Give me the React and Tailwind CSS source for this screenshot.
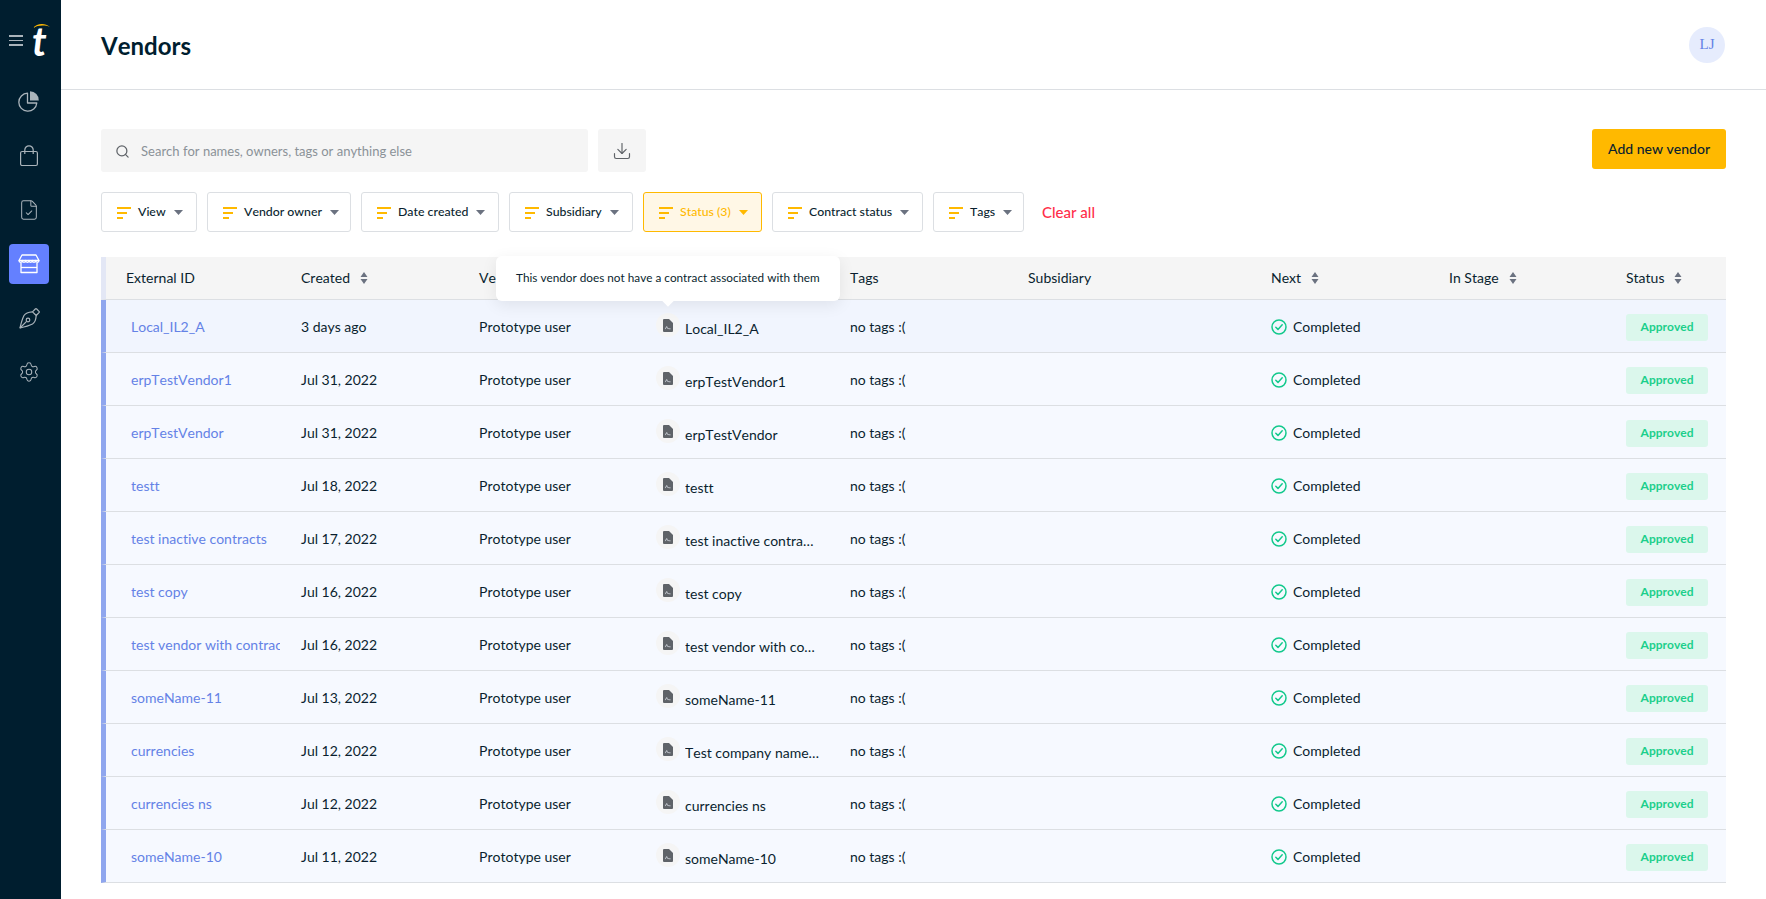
import { Search, Download, FileCheck, Settings } from 'lucide-react';

const rows = [
  { id: 'Local_IL2_A', created: '3 days ago', contract: 'Local_IL2_A' },
  { id: 'erpTestVendor1', created: 'Jul 31, 2022', contract: 'erpTestVendor1' },
  { id: 'erpTestVendor', created: 'Jul 31, 2022', contract: 'erpTestVendor' },
  { id: 'testt', created: 'Jul 18, 2022', contract: 'testt' },
  { id: 'test inactive contracts', created: 'Jul 17, 2022', contract: 'test inactive contracts' },
  { id: 'test copy', created: 'Jul 16, 2022', contract: 'test copy' },
  { id: 'test vendor with contract', created: 'Jul 16, 2022', contract: 'test vendor with contract' },
  { id: 'someName-11', created: 'Jul 13, 2022', contract: 'someName-11' },
  { id: 'currencies', created: 'Jul 12, 2022', contract: 'Test company name limited' },
  { id: 'currencies ns', created: 'Jul 12, 2022', contract: 'currencies ns' },
  { id: 'someName-10', created: 'Jul 11, 2022', contract: 'someName-10' },
];

const filters = [
  { label: 'View', width: 'w-[96px]' },
  { label: 'Vendor owner', width: 'w-[144px]' },
  { label: 'Date created', width: 'w-[138px]' },
  { label: 'Subsidiary', width: 'w-[124px]' },
  { label: 'Status (3)', width: 'w-[119px]', active: true },
  { label: 'Contract status', width: 'w-[151px]' },
  { label: 'Tags', width: 'w-[91px]' },
];

const gridCols = 'grid grid-cols-[195px_178px_177px_194px_178px_243px_178px_177px_100px]';

const PieIcon = () => (
  <svg width="22" height="22" viewBox="0 0 22 22" fill="none" className="-translate-y-[1px]">
    <path d="M9.5 3.2a9 9 0 1 0 9.3 9.8H9.5V3.2Z" stroke="#aab4bb" strokeWidth="1.3" strokeLinejoin="round" />
    <path d="M12 1.2a8.8 8.8 0 0 1 8.8 9.3H12V1.2Z" fill="#aab4bb" />
  </svg>
);

const BagIcon = () => (
  <svg width="20" height="22" viewBox="0 0 20 22" fill="none" stroke="#aab4bb" strokeWidth="1.2">
    <rect x="1.600" y="6.500" width="16.800" height="14" rx="1.500" />
    <path d="M5.800 9V5a4.200 4.200 0 0 1 8.400 0v4" />
  </svg>
);

const StoreIcon = () => (
  <svg width="22" height="20" viewBox="0 0 22 20" fill="none" stroke="#ffffff" strokeWidth="1.300" strokeLinejoin="round">
    <path d="M4 1h14l3 5.500H1L4 1Z" />
    <path d="M1 6.500c0 2.400 3.300 2.400 3.300 0 0 2.400 3.400 2.400 3.400 0 0 2.400 3.300 2.400 3.300 0 0 2.400 3.300 2.400 3.300 0 0 2.400 3.400 2.400 3.400 0 0 2.400 3.300 2.400 3.300 0" />
    <path d="M3 9v9.500h16V9" />
    <path d="M3 13.500h16" />
  </svg>
);

const NibIcon = () => (
  <svg width="21" height="21" viewBox="0 0 21 21" fill="none" stroke="#aab4bb" strokeWidth="1.200" strokeLinejoin="round">
    <path d="M13.500 3.800l3.700 3.700 2.800-2.800a1 1 0 0 0 0-1.400l-2.300-2.300a1 1 0 0 0-1.400 0l-2.800 2.800Z" />
    <path d="M13.500 3.800C10 4 6.500 5 5 7.500 3.500 10.500 2 15.500 1 20c4.500-1 9.500-2.500 12.500-4 2.500-1.500 3.500-5 3.700-8.500" />
    <path d="M1 20l6.600-6.600" />
    <circle cx="9" cy="12" r="1.800" />
  </svg>
);

const FilterIcon = () => (
  <svg width="14" height="12" viewBox="0 0 14 12" className="shrink-0">
    <rect x="0" y="0" width="14" height="2" fill="#ffb900" />
    <rect x="0" y="5" width="10" height="2" fill="#ffb900" />
    <rect x="0" y="10" width="6" height="2" fill="#ffb900" />
  </svg>
);

const Caret = ({ color }) => (
  <svg width="9" height="5" viewBox="0 0 9 5" className="shrink-0">
    <path d="M0 0h9L4.500 5Z" fill={color} />
  </svg>
);

const SortIcon = () => (
  <svg width="8" height="12" viewBox="0 0 8 12" className="ml-[10px] shrink-0">
    <path d="M4 0l3.500 5H.5Z M4 12L.5 7h7Z" fill="#6b7280" />
  </svg>
);

const DocIcon = () => (
  <svg width="10" height="13" viewBox="0 0 10 13">
    <path d="M0 1a1 1 0 0 1 1-1h5l4 4v8a1 1 0 0 1-1 1H1a1 1 0 0 1-1-1Z" fill="#5f6368" />
    <path d="M2 10c1-.2 1.200-2.500 1.700-2.500S4 9.500 4.800 9.500 6 9.800 7.500 9.800" stroke="#f1f5fe" strokeWidth=".7" fill="none" />
  </svg>
);

const CheckIcon = () => (
  <svg width="16" height="16" viewBox="0 0 16 16" fill="none" className="shrink-0">
    <circle cx="8" cy="8" r="7" stroke="#12c98c" strokeWidth="1.500" />
    <path d="M4.800 8.200l2.200 2.200 4.200-4.600" stroke="#12c98c" strokeWidth="1.500" strokeLinecap="round" strokeLinejoin="round" />
  </svg>
);

const Sidebar = () => (
  <aside className="w-[61px] shrink-0 bg-[#001e2f] flex flex-col">
    <div className="h-[82px] w-full relative">
      <div className="absolute left-[9px] top-[35px] w-[14px] flex flex-col gap-[3px]">
        <span className="h-[1.500px] bg-[#aab4bb]" />
        <span className="h-[1.500px] bg-[#aab4bb]" />
        <span className="h-[1.500px] bg-[#aab4bb]" />
      </div>
      <span className="absolute left-[32px] top-[22px] text-[40px] leading-[38px] font-bold italic text-white">t</span>
      <svg width="17" height="6" viewBox="0 0 17 6" className="absolute left-[33px] top-[23px]">
        <path d="M0 5C4 0 12-.5 17 4 12 1.800 5 2 0 5Z" fill="#ffb900" />
      </svg>
    </div>
    <div className="flex flex-col pl-[9px] gap-[14px]">
      <div className="w-10 h-10 flex items-center justify-center"><PieIcon /></div>
      <div className="w-10 h-10 flex items-center justify-center"><BagIcon /></div>
      <div className="w-10 h-10 flex items-center justify-center"><FileCheck size={22} strokeWidth={1.1} color="#aab4bb" /></div>
      <div className="w-10 h-10 flex items-center justify-center rounded bg-[#6480ff]"><StoreIcon /></div>
      <div className="w-10 h-10 flex items-center justify-center"><NibIcon /></div>
      <div className="w-10 h-10 flex items-center justify-center"><Settings size={22} strokeWidth={1.1} color="#aab4bb" /></div>
    </div>
  </aside>
);

const FilterButton = ({ label, width, active }) => (
  <button
    className={`h-10 ${width} shrink-0 rounded-[3px] border pl-[15px] pt-[1px] flex items-center gap-[7px] text-[12.3px] font-medium ${
      active ? 'border-[#ffb900] bg-[#fff7e6] text-[#ffb900]' : 'border-[#dcdfe3] bg-white text-[#0a1f2f]'
    }`}
  >
    <FilterIcon />
    <span>{label}</span>
    <span className="ml-[1px]"><Caret color={active ? '#ffb900' : '#6b7280'} /></span>
  </button>
);

const VendorRow = ({ row, highlighted }) => (
  <div className={`${gridCols} h-[53px] pt-[2px] border-b border-l-[5px] border-b-[#dcdfe3] border-l-[#8fa6ee] items-center text-sm text-[#0a1f2f] ${highlighted ? 'bg-[#f1f5fe]' : 'bg-[#f6f9ff]'}`}>
    <div className="pl-[25px] pr-[21px]">
      <div className="overflow-hidden whitespace-nowrap text-[#6482e6]">{row.id}</div>
    </div>
    <div>{row.created}</div>
    <div>Prototype user</div>
    <div className="flex items-center">
      <div className="w-6 h-6 shrink-0 rounded-full bg-[#f5f5f5] flex items-center justify-center -translate-y-[2px]">
        <DocIcon />
      </div>
      <span className="ml-[5px] w-[135px] truncate translate-y-[2px]">{row.contract}</span>
    </div>
    <div>no tags :(</div>
    <div />
    <div className="flex items-center gap-[6px]">
      <CheckIcon />
      <span>Completed</span>
    </div>
    <div />
    <div>
      <span className="w-[82px] h-[27px] rounded-[3px] bg-[#dbf7ec] text-[#1ccf8b] text-xs font-bold flex items-center justify-center">Approved</span>
    </div>
  </div>
);

const HeaderCell = ({ label, sortable, className }) => (
  <div className={`flex items-center ${className || ''}`}>
    <span>{label}</span>
    {sortable && <SortIcon />}
  </div>
);

export default function App() {
  return (
    <div className="flex h-[899px] overflow-hidden bg-white font-['Lato',sans-serif] text-[#0a1f2f] [font-variant-ligatures:none] [font-kerning:none]">
      <Sidebar />
      <main className="flex-1 min-w-0">
        <header className="h-[90px] border-b border-[#dcdfe3] flex items-center justify-between pl-10 pr-[41px]">
          <h1 className="text-2xl pt-[2px] font-bold text-[#001e2f]">Vendors</h1>
          <div className="w-9 h-9 rounded-full bg-[#e6ecfd] flex items-center justify-center text-[15px] text-[#6482e6] font-['Liberation_Serif',serif]">LJ</div>
        </header>

        <div className="pt-[39px] pl-10 pr-10 relative">
          <div className="flex items-start justify-between">
            <div className="flex gap-[10px]">
              <div className="w-[487px] h-[43px] pt-[2px] rounded-[3px] bg-[#f5f5f5] flex items-center pl-[14px] gap-[11px] text-[13px] text-[#8b9298]">
                <Search size={15} strokeWidth={2} color="#5f6368" />
                <span>Search for names, owners, tags or anything else</span>
              </div>
              <div className="w-12 h-[43px] rounded-[3px] bg-[#f5f5f5] flex items-center justify-center">
                <Download size={20} strokeWidth={1.400} color="#5f6368" />
              </div>
            </div>
            <button className="w-[134px] h-10 rounded-[3px] bg-[#ffb900] text-sm font-medium text-[#0a1f2f]">Add new vendor</button>
          </div>

          <div className="mt-5 flex items-center gap-[10px]">
            {filters.map((f) => (
              <FilterButton key={f.label} {...f} />
            ))}
            <span className="ml-2 text-[15px] font-medium text-[#ff2d4a]">Clear all</span>
          </div>

          <div className="mt-[25px] relative">
            <div className={`${gridCols} h-[43px] border-b border-l-[5px] border-b-[#dcdfe3] border-l-[#e3e7f5] bg-[#f5f5f5] items-center text-sm`}>
              <HeaderCell label="External ID" className="pl-[20px]" />
              <HeaderCell label="Created" sortable />
              <HeaderCell label="Vendor owner" />
              <HeaderCell label="Contract" />
              <HeaderCell label="Tags" />
              <HeaderCell label="Subsidiary" />
              <HeaderCell label="Next" sortable />
              <HeaderCell label="In Stage" sortable />
              <HeaderCell label="Status" sortable />
            </div>
            {rows.map((row, i) => (
              <VendorRow key={row.id} row={row} highlighted={i === 0} />
            ))}

            <div className="absolute left-[395px] top-[-1px] w-[344px] h-[45px] pb-[2px] rounded-md bg-white shadow-[0_4px_16px_rgba(0,0,0,0.08)] flex items-center pl-5 text-[11.75px] text-[#0a1f2f]">
              This vendor does not have a contract associated with them
              <span className="absolute left-[168px] bottom-[-4px] w-2 h-2 rotate-45 bg-white" />
            </div>
          </div>
        </div>
      </main>
    </div>
  );
}
